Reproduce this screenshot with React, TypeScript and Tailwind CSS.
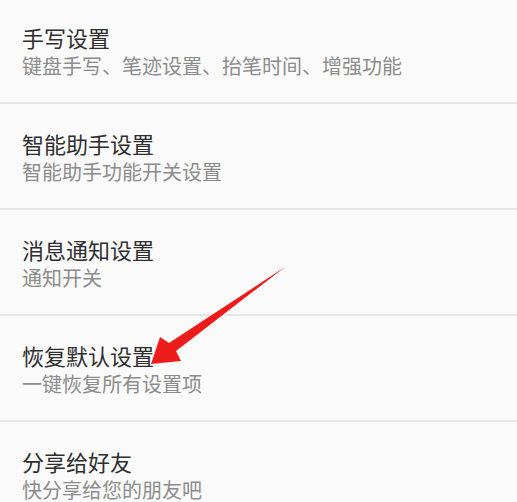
import React from "react";

const items = [
  { title: "手写设置", sub: "键盘手写、笔迹设置、抬笔时间、增强功能" },
  { title: "智能助手设置", sub: "智能助手功能开关设置" },
  { title: "消息通知设置", sub: "通知开关" },
  { title: "恢复默认设置", sub: "一键恢复所有设置项" },
  { title: "分享给好友", sub: "快分享给您的朋友吧" },
];

export default function App() {
  return (
    <div
      className="relative w-[517px] h-[502px] overflow-hidden bg-[#fafafa]"
      style={{ fontFamily: '"Noto Sans CJK SC", "Noto Sans", sans-serif' }}
    >
      <div className="flex flex-col">
        {items.map((it, i) => (
          <div
            key={it.title}
            className={
              i === 0
                ? "flex flex-col pl-[22px] pt-[23px] pb-[23px] border-b-2 border-[#e6e6e6]"
                : "flex flex-col pl-[22px] pt-[25px] pb-[23px] border-b-2 border-[#e6e6e6]"
            }
          >
            <div className="text-[22px] leading-[28px] text-[#2e2e2e]">{it.title}</div>
            <div className="mt-[2px] text-[20px] leading-[26px] text-[#8c8c8c]">{it.sub}</div>
          </div>
        ))}
      </div>
      <svg className="absolute left-0 top-0" width="517" height="502" viewBox="0 0 517 502">
        <polygon
          points="285,267 176,351 181,361 151,364 160,337 169,343"
          fill="#ec1c1c"
        />
      </svg>
    </div>
  );
}
